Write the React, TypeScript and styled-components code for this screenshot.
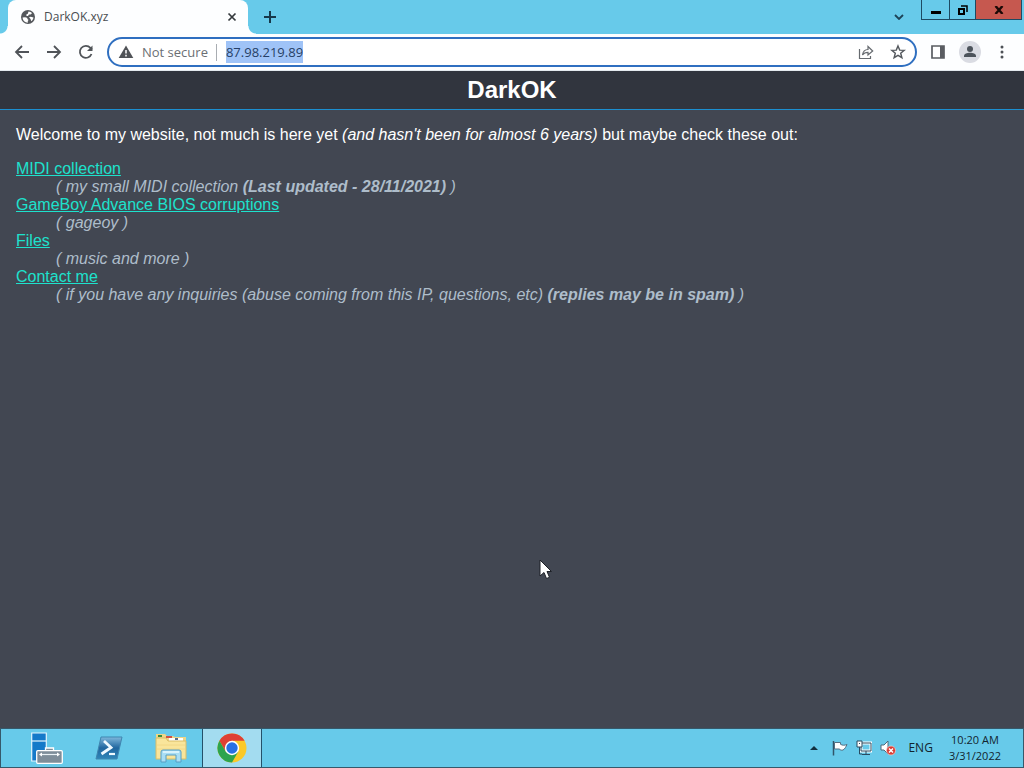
import React from "react";
import styled, { createGlobalStyle } from "styled-components";

const GlobalStyle = createGlobalStyle`
  * { box-sizing: border-box; }
  body { margin: 0; }
  button { font: inherit; color: inherit; border: 0; padding: 0; background: none; }
  svg { display: block; flex: none; }
`;

const uiFont = `"Open Sans", "Noto Sans", sans-serif`;

const Desktop = styled.div`
  display: flex;
  flex-direction: column;
  min-height: 100vh;
  position: relative;
  background: #424752;
`;

const TabStrip = styled.header`
  display: flex;
  height: 34px;
  padding-left: 8px;
  background: #67caea;
  font: 12px/16px ${uiFont};
`;

const Tab = styled.div`
  position: relative;
  display: flex;
  align-items: center;
  gap: 8px;
  width: 240px;
  padding: 0 10px 0 12px;
  background: #fdfeff;
  border-radius: 8px 8px 0 0;
  color: #4a4d51;
  &::before,
  &::after {
    content: "";
    position: absolute;
    bottom: 0;
    width: 8px;
    height: 8px;
  }
  &::before {
    right: 100%;
    background: radial-gradient(circle at 0 0, transparent 7px, #fdfeff 8px);
  }
  &::after {
    left: 100%;
    background: radial-gradient(circle at 100% 0, transparent 7px, #fdfeff 8px);
  }
`;

const TabTitle = styled.span`
  flex: 1;
`;

const StripButton = styled.button`
  display: grid;
  place-items: center;
  width: 44px;
  height: 34px;
`;

const SmallButton = styled.button`
  display: grid;
  place-items: center;
  width: 12px;
  height: 16px;
`;

const Spacer = styled.div`
  flex: 1;
`;

const WindowButtons = styled.div`
  display: flex;
  height: 20px;
  margin-right: 2px;
  border: 1px solid #1d4a63;
  border-top: 0;
`;

const WindowButton = styled.button<{ $width: number; $danger?: boolean }>`
  display: grid;
  place-items: center;
  width: ${(p) => p.$width}px;
  background: ${(p) => (p.$danger ? "#c6584f" : "transparent")};
  & + & {
    border-left: 1px solid #1d4a63;
  }
`;

const Toolbar = styled.nav`
  display: flex;
  align-items: center;
  height: 37px;
  padding: 0 6px;
  background: #fdfeff;
  border-bottom: 1px solid #e4eaee;
`;

const ToolButton = styled.button`
  display: grid;
  place-items: center;
  width: 32px;
  height: 30px;
`;

const AddressBar = styled.div`
  display: flex;
  flex: 1;
  align-items: center;
  height: 30px;
  margin: 0 5px;
  padding: 0 1px 0 9px;
  border: 2px solid #2f6fc0;
  border-radius: 15px;
  background: #fff;
  font: 13px/22px ${uiFont};
`;

const Security = styled.span`
  margin-left: 8px;
  padding-right: 8px;
  color: #6b6f74;
`;

const Divider = styled.span`
  width: 1px;
  height: 17px;
  margin-right: 9px;
  background: #a9adb2;
`;

const AddressInput = styled.input`
  field-sizing: content;
  height: 22px;
  padding: 0;
  border: 0;
  outline: 0;
  background: #9fc3f7;
  color: #263f66;
  font: inherit;
`;

const Avatar = styled.span`
  display: grid;
  place-items: center;
  width: 22px;
  height: 22px;
  border-radius: 50%;
  background: #dadce3;
`;

const Page = styled.main`
  flex: 1;
  color: #fff;
  font: 16px/18px "Liberation Sans", Arial, sans-serif;
`;

const SiteTitle = styled.h1`
  margin: 0;
  padding: 5px 0;
  background: #31353e;
  border-bottom: 1px solid #1c8fd0;
  font-size: 24px;
  line-height: 28px;
  text-align: center;
`;

const Content = styled.div`
  padding: 16px;
`;

const Intro = styled.p`
  margin: 0 0 16px;
`;

const LinkList = styled.dl`
  margin: 0;
`;

const SiteLink = styled.a`
  color: #1de2cd;
`;

const Note = styled.dd`
  margin: 0 0 0 40px;
  color: #aebdca;
  font-style: italic;
`;

const Taskbar = styled.footer`
  display: flex;
  height: 40px;
  border: 1px solid #35596b;
  background: #67caea;
  color: #12242e;
  font: 12px/16px ${uiFont};
`;

const TaskButton = styled.button<{ $active?: boolean }>`
  display: grid;
  place-items: center;
  width: ${(p) => (p.$active ? 60 : 62)}px;
  border: solid #24516a;
  border-width: ${(p) => (p.$active ? "0 1px" : "0")};
  background: ${(p) => (p.$active ? "#a3dcf0" : "transparent")};
`;

const TaskButtons = styled.div`
  display: flex;
  padding-left: 15px;
`;

const Tray = styled.div`
  display: flex;
  align-items: center;
  gap: 12px;
  padding-right: 22px;
`;

const TrayIcons = styled.div`
  display: flex;
  gap: 8px;
`;

const Clock = styled.time`
  margin-left: 4px;
  font-size: 11px;
  text-align: center;
`;

const Pointer = styled.svg`
  position: absolute;
  left: 53%;
  top: 73%;
  margin: -2px 0 0 -4px;
`;

const links = [
  { name: "MIDI collection", note: "my small MIDI collection", strong: "(Last updated - 28/11/2021)" },
  { name: "GameBoy Advance BIOS corruptions", note: "gageoy" },
  { name: "Files", note: "music and more" },
  {
    name: "Contact me",
    note: "if you have any inquiries (abuse coming from this IP, questions, etc)",
    strong: "(replies may be in spam)",
  },
];

const GlobeIcon = () => (
  <svg width="16" height="16" viewBox="0 0 16 16">
    <circle cx="8" cy="8" r="7" fill="#55585c" />
    <path d="M2.600 8.500 5 8.300c1.500 0 2.600.8 2.600 2 1 .2 1 1.200.2 1.700v1.700C5 13.700 2.700 11.500 2.600 8.500zM8.500 2.600c1.500.1 2.700.8 3.500 1.700l-1.500 1.200H9L8 7H6.500L6.300 5.500l1.500-.8zM9 8.300l1.800-.6 2.700.8c-.2 1.500-1 2.900-2.200 3.800l-.8-2.200z" fill="#fff" />
  </svg>
);

const ArrowIcon = ({ forward = false }: { forward?: boolean }) => (
  <svg width="16" height="16" viewBox="0 0 16 16" fill="none" stroke="#505459" strokeWidth="1.800">
    <path d={forward ? "M1 8h13M8 2l6 6-6 6" : "M15 8H2M8 2 2 8l6 6"} />
  </svg>
);

const ReloadIcon = () => (
  <svg width="16" height="16" viewBox="0 0 16 16">
    <path d="M13.500 10A6 6 0 1 1 12.400 3.900L14 5.500" fill="none" stroke="#505459" strokeWidth="1.800" />
    <path d="M14.500 1.500V7H9z" fill="#505459" />
  </svg>
);

const WarningIcon = () => (
  <svg width="16" height="16" viewBox="0 0 16 16">
    <path d="M8 1.500 15.300 14H.7z" fill="#505357" />
    <path d="M8 6v3.500M8 10.800v1.600" stroke="#fff" strokeWidth="1.500" />
  </svg>
);

const ShareIcon = () => (
  <svg width="16" height="16" viewBox="0 0 16 16" fill="none" stroke="#666a6f" strokeWidth="1.200">
    <path d="M1.500 5v9.500h11V12" />
    <path d="M4.500 11C5 7.500 7 5.500 10 5.500V2.500L14.700 7 10 11V8.300C7.500 8.300 5.800 9 4.500 11z" />
  </svg>
);

const StarIcon = () => (
  <svg width="16" height="16" viewBox="0 0 16 16" fill="none" stroke="#55595e" strokeWidth="1.400">
    <path d="m8 1.900 1.700 4.200 4.500.3-3.500 2.900 1.200 4.400L8 11.300l-3.900 2.400 1.200-4.400-3.500-2.900 4.500-.3z" />
  </svg>
);

const PanelIcon = () => (
  <svg width="14" height="14" viewBox="0 0 14 14">
    <path d="M1 1h12v12H1z" fill="#fff" stroke="#5a5d62" strokeWidth="1.700" />
    <path d="M9 1h4v12H9z" fill="#5a5d62" />
  </svg>
);

const PersonIcon = () => (
  <svg width="14" height="14" viewBox="0 0 14 14" fill="#4d545c">
    <circle cx="7" cy="4" r="3" />
    <path d="M1 12V11c0-2 3-3.200 6-3.200s6 1.200 6 3.200v1z" />
  </svg>
);

const MenuIcon = () => (
  <svg width="4" height="14" viewBox="0 0 4 14" fill="#4d5156">
    <circle cx="2" cy="2" r="1.500" />
    <circle cx="2" cy="7" r="1.500" />
    <circle cx="2" cy="12" r="1.500" />
  </svg>
);

const ServerIcon = () => (
  <svg width="32" height="32" viewBox="0 0 32 32">
    <path d="M.7 1h14.600v28H.7z" fill="#1479c9" stroke="#e3f6fd" strokeWidth="1.200" />
    <path d="M1 9h14" stroke="#e3f6fd" strokeWidth="1.200" />
    <path d="M14.500 18.500V16h8v2.500" fill="#7e8d99" stroke="#fff" strokeWidth="1.300" />
    <rect x="5.700" y="18.700" width="25.600" height="12.600" rx="1" fill="#7e8d99" stroke="#fff" strokeWidth="1.300" />
    <path d="M9 22.500h19" stroke="#e9f0f4" strokeWidth="1.200" />
    <path d="m8 22.500 3-2v4zM29 22.500l-3-2v4z" fill="#fff" />
  </svg>
);

const PowerShellIcon = () => (
  <svg width="28" height="24" viewBox="0 0 28 24">
    <defs>
      <linearGradient id="shell" x1="0" y1="0" x2="0" y2="1">
        <stop offset="0" stopColor="#7fb8dc" />
        <stop offset=".5" stopColor="#21669f" />
        <stop offset="1" stopColor="#2f86b8" />
      </linearGradient>
    </defs>
    <path d="M6 1h21l-5 22H1z" fill="url(#shell)" stroke="#3f86b0" strokeLinejoin="round" />
    <path d="m9 5 7 6.500L6.500 18" fill="none" stroke="#eef9ff" strokeWidth="2.800" />
    <path d="M14 18h6" stroke="#eef9ff" strokeWidth="2.200" />
  </svg>
);

const FolderIcon = () => (
  <svg width="32" height="30" viewBox="0 0 32 30">
    <path d="M1 5V1h9l2 2h6l2 1h11v5H1z" fill="#eed688" />
    <path d="M3 2h4v2H3z" fill="#378c3e" />
    <path d="M11 3h6v2h-6z" fill="#cf5146" />
    <path d="M14 5h14v3H14z" fill="#fff" />
    <path d="M20 5h3v2h-3z" fill="#576e89" />
    <path d="M1 5h10l2 3h18v18H1z" fill="#f9e59b" stroke="#d9bd68" />
    <path d="M2 12h28M2 16h28" stroke="#f2d886" />
    <path d="M6 29V19q0-2 2-2h16q2 0 2 2v10h-5v-7H11v7z" fill="#a9def4" stroke="#579ec4" />
    <path d="M8 19h16" stroke="#e8faff" strokeWidth="1.500" />
  </svg>
);

const ChromeIcon = () => (
  <svg width="30" height="30" viewBox="0 0 30 30">
    <circle cx="15" cy="15" r="14.500" fill="#fbc928" />
    <path d="M2.440 7.750A14.500 14.500 0 0 1 27.560 7.750H15L8.700 18.600z" fill="#df4034" />
    <path d="M2.440 7.750A14.500 14.500 0 0 0 15 29.500l6.300-10.900L15 22l-6.300-3.400z" fill="#2da44e" />
    <circle cx="15" cy="15" r="7.200" fill="#fff" />
    <circle cx="15" cy="15" r="5.700" fill="#2870e4" />
  </svg>
);

const FlagIcon = () => (
  <svg width="16" height="16" viewBox="0 0 16 16">
    <path d="M1.500 1v14.500" stroke="#315469" strokeWidth="1.500" />
    <path d="M2.500 2.500h6v1.800c2 1.200 4 1.200 6.500.2-1 2-2 4.500-4 5.500-1.500.4-2.500 0-3.500-.7V9h-5z" fill="#fff" stroke="#536f82" />
  </svg>
);

const NetworkIcon = () => (
  <svg width="16" height="16" viewBox="0 0 16 16">
    <path d="M5 3h10v8H5z" fill="#67caea" stroke="#fff" strokeWidth="3" />
    <path d="M5 3h10v8H5zM10 11v3M6 14.500h8" fill="none" stroke="#294b61" />
    <path d="M1 1h5v6H1z" fill="#fff" stroke="#294b61" />
    <path d="M3 3.500h1M3.500 7v7H6" fill="none" stroke="#294b61" />
  </svg>
);

const SoundIcon = () => (
  <svg width="16" height="16" viewBox="0 0 16 16">
    <path d="M1 5h3l4-4v13l-4-4H1z" fill="#fff" stroke="#4c6b7d" />
    <circle cx="11" cy="10.500" r="4.500" fill="#d93b34" stroke="#f7d1cb" strokeWidth=".7" />
    <path d="m9 8.500 4 4m0-4-4 4" stroke="#fff" strokeWidth="1.500" />
  </svg>
);

export default function App() {
  return (
    <Desktop>
      <GlobalStyle />
      <TabStrip>
        <Tab>
          <GlobeIcon />
          <TabTitle>DarkOK.xyz</TabTitle>
          <SmallButton aria-label="Close tab">
            <svg width="10" height="10" viewBox="0 0 10 10" stroke="#35393d" strokeWidth="1.700">
              <path d="m1.500 1.500 7 7m0-7-7 7" />
            </svg>
          </SmallButton>
        </Tab>
        <StripButton aria-label="New tab">
          <svg width="12" height="12" viewBox="0 0 12 12" stroke="#16384a" strokeWidth="2">
            <path d="M6 0v12M0 6h12" />
          </svg>
        </StripButton>
        <Spacer />
        <StripButton aria-label="Search tabs">
          <svg width="10" height="6" viewBox="0 0 10 6" fill="none" stroke="#1d4357" strokeWidth="1.800">
            <path d="m1 1 4 4 4-4" />
          </svg>
        </StripButton>
        <WindowButtons>
          <WindowButton $width={27} aria-label="Minimize">
            <svg width="10" height="10" viewBox="0 0 10 10">
              <path d="M0 6h10v3H0z" fill="#000" />
            </svg>
          </WindowButton>
          <WindowButton $width={26} aria-label="Restore">
            <svg width="10" height="10" viewBox="0 0 10 10" fill="none" stroke="#000">
              <path d="M1 4h5v5H1z" strokeWidth="2" />
              <path d="M3 1h6v6" strokeWidth="1.500" />
            </svg>
          </WindowButton>
          <WindowButton $width={46} $danger aria-label="Close">
            <svg width="10" height="8" viewBox="0 0 10 8" stroke="#1c0906" strokeWidth="2.400">
              <path d="m1.500 0 7 8m0-8-7 8" />
            </svg>
          </WindowButton>
        </WindowButtons>
      </TabStrip>
      <Toolbar>
        <ToolButton aria-label="Back"><ArrowIcon /></ToolButton>
        <ToolButton aria-label="Forward"><ArrowIcon forward /></ToolButton>
        <ToolButton aria-label="Reload"><ReloadIcon /></ToolButton>
        <AddressBar>
          <WarningIcon />
          <Security>Not secure</Security>
          <Divider />
          <AddressInput aria-label="Address" defaultValue="87.98.219.89" />
          <Spacer />
          <ToolButton aria-label="Share"><ShareIcon /></ToolButton>
          <ToolButton aria-label="Bookmark"><StarIcon /></ToolButton>
        </AddressBar>
        <ToolButton aria-label="Side panel"><PanelIcon /></ToolButton>
        <ToolButton aria-label="Profile"><Avatar><PersonIcon /></Avatar></ToolButton>
        <ToolButton aria-label="Menu"><MenuIcon /></ToolButton>
      </Toolbar>
      <Page>
        <SiteTitle>DarkOK</SiteTitle>
        <Content>
          <Intro>
            Welcome to my website, not much is here yet <i>(and hasn't been for almost 6 years)</i> but maybe check these out:
          </Intro>
          <LinkList>
            {links.map((link) => (
              <React.Fragment key={link.name}>
                <dt><SiteLink href="#">{link.name}</SiteLink></dt>
                <Note>( {link.note} {link.strong && <><b>{link.strong}</b> </>})</Note>
              </React.Fragment>
            ))}
          </LinkList>
        </Content>
      </Page>
      <Taskbar>
        <TaskButtons>
          <TaskButton aria-label="Server Manager"><ServerIcon /></TaskButton>
          <TaskButton aria-label="PowerShell"><PowerShellIcon /></TaskButton>
          <TaskButton aria-label="File Explorer"><FolderIcon /></TaskButton>
          <TaskButton $active aria-label="Chrome"><ChromeIcon /></TaskButton>
        </TaskButtons>
        <Spacer />
        <Tray>
          <SmallButton aria-label="Show hidden icons">
            <svg width="8" height="4" viewBox="0 0 8 4"><path d="m0 4 4-4 4 4z" fill="#12303f" /></svg>
          </SmallButton>
          <TrayIcons>
            <FlagIcon />
            <NetworkIcon />
            <SoundIcon />
          </TrayIcons>
          <button>ENG</button>
          <Clock>10:20 AM<br />3/31/2022</Clock>
        </Tray>
      </Taskbar>
      <Pointer width="13" height="21" viewBox="0 0 13 21">
        <path d="M1 1v16l4-3.500 2.500 6 3-1.200L8 12.500h4.500z" fill="#fff" stroke="#1d2026" />
      </Pointer>
    </Desktop>
  );
}
